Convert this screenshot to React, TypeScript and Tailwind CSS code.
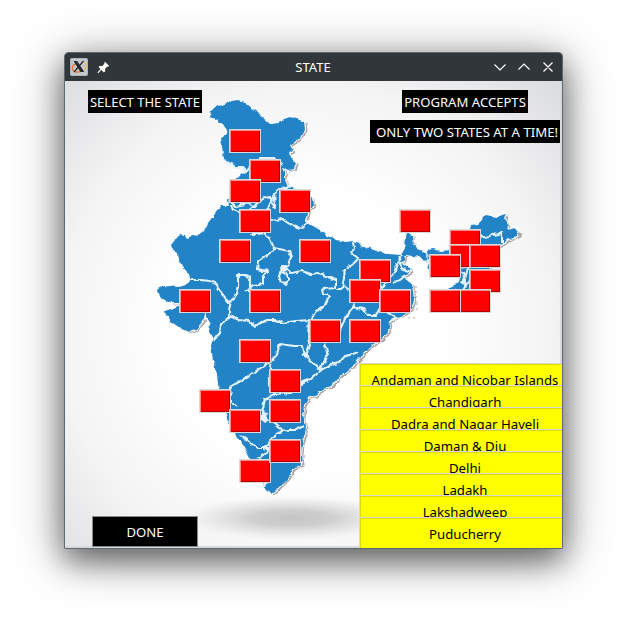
import React from "react";

const states: { name: string; x: number; y: number }[] = [
  { name: "Jammu and Kashmir", x: 229, y: 129 },
  { name: "Himachal Pradesh", x: 249, y: 159 },
  { name: "Punjab", x: 229, y: 179 },
  { name: "Uttarakhand", x: 279, y: 189 },
  { name: "Haryana", x: 239, y: 209 },
  { name: "Rajasthan", x: 219, y: 239 },
  { name: "Uttar Pradesh", x: 299, y: 239 },
  { name: "Sikkim", x: 399, y: 209 },
  { name: "Bihar", x: 359, y: 259 },
  { name: "Jharkhand", x: 349, y: 279 },
  { name: "West Bengal", x: 379, y: 289 },
  { name: "Gujarat", x: 179, y: 289 },
  { name: "Madhya Pradesh", x: 249, y: 289 },
  { name: "Chhattisgarh", x: 309, y: 319 },
  { name: "Odisha", x: 349, y: 319 },
  { name: "Maharashtra", x: 239, y: 339 },
  { name: "Telangana", x: 269, y: 369 },
  { name: "Andhra Pradesh", x: 269, y: 399 },
  { name: "Goa", x: 199, y: 389 },
  { name: "Karnataka", x: 229, y: 409 },
  { name: "Kerala", x: 239, y: 459 },
  { name: "Tamil Nadu", x: 269, y: 439 },
  { name: "Arunachal Pradesh", x: 449, y: 229 },
  { name: "Assam", x: 449, y: 244 },
  { name: "Nagaland", x: 469, y: 244 },
  { name: "Meghalaya", x: 429, y: 254 },
  { name: "Manipur", x: 469, y: 269 },
  { name: "Mizoram", x: 459, y: 289 },
  { name: "Tripura", x: 429, y: 289 },
];

const territories = [
  "Andaman and Nicobar Islands",
  "Chandigarh",
  "Dadra and Nagar Haveli",
  "Daman & Diu",
  "Delhi",
  "Ladakh",
  "Lakshadweep",
  "Puducherry",
];

const mainland =
  "M210 116L211 111L216 106L225 105L230 101L238 100L244 102L251 107L258 112L261 116L270 124L280 123L284 119L290 117L295 118L304 122L305 129L301 137L296 141L290 145L292 149L289 154L294 160L296 163L294 169L288 170L283 167L285 173L285 180L288 187L294 188L302 193L312 198L314 203L309 209L307 218L304 221L310 225L320 230L328 236L337 240L345 242L353 241L359 243L362 247L371 248L376 251L388 254L401 255L404 250L406 246L404 243L406 236L408 233L412 235L413 244L417 249L425 252L428 257L425 261L419 257L413 256L406 255L405 260L402 264L410 269L411 272L404 275L406 280L412 284L413 292L414 300L411 309L404 315L396 317L390 322L388 332L382 339L372 345L365 352L358 359L352 367L343 374L337 379L331 386L323 389L315 396L308 398L304 405L303 415L306 426L305 434L302 443L301 453L302 465L294 468L288 478L281 485L276 490L271 494L265 488L259 478L254 469L251 460L247 452L242 444L236 435L229 423L224 409L219 391L217 374L213 360L211 346L213 338L209 332L210 324L206 318L206 311L203 321L196 329L188 332L180 328L173 323L166 315L165 311L177 307L184 303L170 303L160 297L158 289L163 286L179 287L186 285L190 281L187 272L182 266L179 260L178 253L172 249L171 245L175 240L180 234L184 235L186 238L200 234L205 229L208 223L218 210L221 206L229 206L228 200L236 184L235 180L242 174L247 172L242 168L235 167L224 160L222 145L221 137L228 134L225 127L220 123L213 118Z";

const northEast =
  "M427 250L433 249L440 251L451 250L460 246L467 243L474 239L480 234L470 228L471 225L478 224L486 216L491 217L496 218L502 215L506 214L505 220L508 226L507 230L515 228L519 232L516 237L509 239L501 245L493 251L494 260L489 270L483 280L480 289L474 300L468 306L464 301L460 296L456 290L446 289L452 286L459 283L461 272L454 269L443 268L429 269L428 262Z";

const borders = [
  "M224 160L235 167L242 167L246 171L251 165L260 158L275 158L283 166",
  "M229 201L236 206L249 203L254 207L259 201L264 197L271 198L272 204L275 208L274 193L279 188L285 189L290 186L295 188L299 193",
  "M232 205L234 210L239 213L249 210L256 205",
  "M274 198L269 205L268 214L272 221L282 219L288 223L302 229L308 220",
  "M250 234L258 234L264 233L269 237L274 248L289 251L291 257L288 266L283 267L279 276L281 283L286 284L289 279L286 274L282 272L281 267",
  "M275 249L258 262L257 269L268 271L263 275L263 284L253 286L246 292",
  "M250 292L250 277L245 275L238 275L238 287L234 299L229 303L217 287L215 283L209 281L201 280L190 280",
  "M286 269L290 273L302 271L310 274L319 273L330 278L336 280L336 288L322 289L323 294L329 296L324 307L316 311L310 321",
  "M231 301L229 310L229 318L221 324L220 333L214 340",
  "M230 316L238 320L249 321L254 326L267 320L276 320L282 323L296 321L309 320L308 338L310 345L306 357L313 363L320 370L328 354L324 344",
  "M353 242L354 248L352 254L358 259L354 263L345 269L344 278L342 289L336 289",
  "M344 285L352 291L354 307L346 317L342 325L341 332",
  "M402 255L396 266L395 271L388 282L378 289",
  "M404 261L400 263L401 268L411 272M405 276L400 280L393 282",
  "M352 307L363 309L368 315L376 315L380 308L390 314L396 318L390 322",
  "M190 280L187 272",
  "M230 390L230 387L237 383L252 374L265 365L271 361L276 357L280 344L294 346L302 346L304 354L308 357",
  "M270 364L273 371L269 378L269 385L274 395L265 399L263 408L261 418L266 421L271 420L280 427L281 432L272 438L269 443L263 450",
  "M274 394L290 393L297 384L310 379L319 371L330 365L339 363L345 356L353 354L359 352",
  "M230 387L231 402L237 407",
  "M281 431L287 430L295 430L304 426",
  "M240 435L249 442L258 448L270 448L263 455L259 458L266 469L267 478L264 486",
  "M296 386L304 383L300 382L308 379",
];

const northEastBorders = [
  "M470 243L480 238L493 235L502 233L502 243M482 236L470 243",
  "M452 268L467 267L474 263L484 257L493 251M459 270L466 275L462 283M470 265L466 274L464 287M473 280L466 284L462 290",
];

function MapPicture() {
  return (
    <svg
      className="absolute inset-0 h-[467px] w-[497px]"
      viewBox="65 81 497 467"
      aria-hidden="true"
    >
      <defs>
        <filter id="rough" x="-5%" y="-5%" width="110%" height="110%">
          <feTurbulence type="fractalNoise" baseFrequency="0.2" numOctaves="1" seed="7" result="noise" />
          <feDisplacementMap in="SourceGraphic" in2="noise" scale="5" xChannelSelector="R" yChannelSelector="G" />
          <feGaussianBlur stdDeviation="0.35" />
        </filter>
        <radialGradient id="ground">
          <stop offset="0" stopColor="#c5c5c5" />
          <stop offset="0.35" stopColor="#cacaca" stopOpacity="0.9" />
          <stop offset="0.7" stopColor="#dadada" stopOpacity="0.5" />
          <stop offset="1" stopColor="#eeeeee" stopOpacity="0" />
        </radialGradient>
        <radialGradient id="paper" gradientUnits="userSpaceOnUse" cx="305" cy="330" r="350">
          <stop offset="0" stopColor="#ffffff" />
          <stop offset="0.42" stopColor="#fefefe" />
          <stop offset="0.7" stopColor="#f4f4f5" />
          <stop offset="1" stopColor="#dcdddf" />
        </radialGradient>
      </defs>
      <rect x="65" y="81" width="497" height="467" fill="url(#paper)" />
      <ellipse cx="292" cy="518" rx="115" ry="23" fill="url(#ground)" />
      <g filter="url(#rough)" strokeLinejoin="round">
        <g transform="translate(2.5 1.5)" fill="#aaa2a1">
          <path d={mainland} />
          <path d={northEast} />
        </g>
        <g fill="#2484c6" stroke="#f6fbfe" strokeWidth="2.4" paintOrder="stroke">
          <path d={mainland} />
          <path d={northEast} />
        </g>
        <g fill="none" stroke="#e4f3fb" strokeWidth="2.1">
          {borders.map((d) => (
            <path key={d} d={d} />
          ))}
          {northEastBorders.map((d) => (
            <path key={d} d={d} />
          ))}
        </g>
        <path d="M262 412l5 1-1 8-5-2zM305 380l5-1-2 4zM282 266l5 1 1 4-5 1z" fill="#e4f3fb" />
      </g>
      <path d="M416 286v14m1 3v9m-9 6h10" stroke="#aaa" strokeWidth="1" strokeDasharray="2 3" fill="none" />
      <path d="M561 81V364M65 547H360" stroke="#d9d9d9" strokeWidth="2" />
    </svg>
  );
}

function TitleBar() {
  return (
    <header className="grid h-[28px] grid-cols-[1fr_auto_1fr] items-center rounded-t-[3px] bg-[#31363b] text-white">
      <div className="flex items-center gap-[9px] pl-[5px]">
        <svg className="size-[18px]" viewBox="0 0 18 18">
          <rect x="0.5" y="0.5" width="17" height="17" rx="1" fill="#c3c8cd" stroke="#aeb4b9" />
          <path d="M7 6C2 6 0 13 6 14c3 .5 5-.4 7-2" fill="none" stroke="#ee7338" strokeWidth="1.3" />
          <path d="M13 4.3C17 5 17 9 14 12" fill="none" stroke="#e9bd65" strokeWidth="1.3" />
          <path d="M3.5 3h3.7l7 11h-3.7z" fill="#25292c" />
          <path d="M13.5 3L4 14" stroke="#25292c" strokeWidth="1.2" />
        </svg>
        <svg className="size-[13px]" viewBox="0 0 13 13" fill="white">
          <path d="M8 0.8L12.2 5l-1.3.8-.6-.2-2.2 2.2.1 2.5-1.3 1.2L1.5 6.1l1.3-1.2 2.5.1 2.2-2.2L7.2 2z" />
          <path d="M4.3 8.2L.8 11.8" stroke="white" strokeWidth="1.2" />
        </svg>
      </div>
      <h1 className="mr-px text-[13px] leading-[28px]">STATE</h1>
      <svg
        className="mr-[8px] h-[12px] w-[60px] justify-self-end"
        viewBox="0 0 60 12"
        fill="none"
        stroke="white"
        strokeWidth="1.2"
      >
        <path d="M0.500 3.500L6 9L11.500 3.500M24.500 8.500L30 3L35.500 8.500M49.500 1.500L58.500 10.500M58.500 1.500L49.500 10.500" />
      </svg>
    </header>
  );
}

const label = "h-[23px] bg-black leading-[24px] text-white whitespace-nowrap text-center";

export default function App() {
  return (
    <main className="h-[625px] w-[627px] overflow-hidden bg-white pt-[52px] pl-[64px] font-['Noto_Sans',sans-serif]">
      <div className="h-[497px] w-[499px] rounded-t-[4px] border border-[#5d6a73] shadow-[0_12px_28px_rgba(0,0,0,0.42),0_8px_50px_rgba(0,0,0,0.42)]">
        <TitleBar />
        <section className="relative flex h-[467px] w-[497px] flex-col overflow-hidden">
          <MapPicture />
          {states.map((s) => (
            <button
              key={s.name}
              aria-label={s.name}
              className="absolute h-[24px] w-[32px] border border-[#d9d9d9] bg-[#ff0000] shadow-[inset_1px_1px_0_#ff8c8c,inset_-1px_-1px_0_#b00000]"
              style={{ left: s.x - 65, top: s.y - 81 }}
            />
          ))}
          <div className="relative flex items-start justify-between pt-[9px] pr-[2px] pl-[23px]">
            <p className={`${label} w-[114px] text-[13px]`}>SELECT THE STATE</p>
            <div className="flex flex-col items-end gap-[7px]">
              <p className={`${label} mr-[32px] w-[126px] text-[13.1px]`}>PROGRAM ACCEPTS</p>
              <p className={`${label} w-[190px] pl-[4px] text-[13.2px]`}>ONLY TWO STATES AT A TIME!</p>
            </div>
          </div>
          <div className="relative mt-auto flex items-end justify-between pl-[27px]">
            <button className="mb-px h-[31px] w-[106px] border border-[#8a8a8a] bg-black text-[13.1px] leading-[30px] text-white">
              DONE
            </button>
            <ul className="flex h-[185px] w-[203px] flex-col overflow-hidden">
              {territories.map((name) => (
                <li
                  key={name}
                  className="h-[22px] w-[211px] shrink-0 overflow-hidden border-t border-l border-[#d9d9d9] bg-[#ffff00] text-center text-[13.2px] leading-[33px] whitespace-nowrap text-black shadow-[inset_1px_1px_0_#dcdc00] last:h-[31px]"
                >
                  {name}
                </li>
              ))}
            </ul>
          </div>
        </section>
      </div>
    </main>
  );
}
